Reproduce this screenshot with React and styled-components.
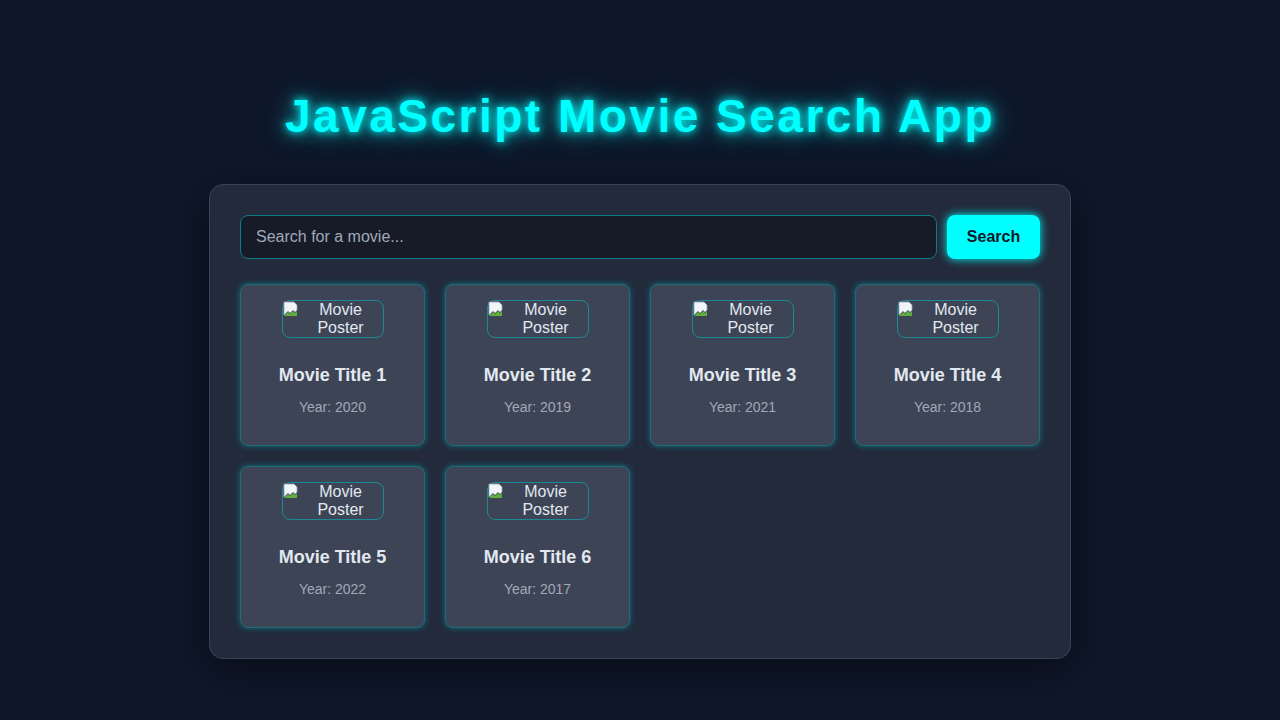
import React from "react";
import styled, { createGlobalStyle } from "styled-components";

const Global = createGlobalStyle`
  html, body { margin: 0; background: #0f172a; font-family: "Liberation Sans", Arial, sans-serif; }
`;
const Page = styled.div`
  min-height: 720px; display: flex; flex-direction: column; align-items: center; padding-top: 88px; box-sizing: border-box;
`;
const Title = styled.h1`
  margin: 0 0 40px; font-size: 46px; font-weight: 700; letter-spacing: 2.5px; color: #00ffff; line-height: 56px;
  text-shadow: 0 0 8px #00ffff, 0 0 18px rgba(0,255,255,0.6), 0 0 30px rgba(0,255,255,0.4);
`;
const Panel = styled.div`
  width: 862px; box-sizing: border-box; padding: 30px; background: #222a3b; border: 1px solid #3b4456;
  border-radius: 14px; box-shadow: 0 10px 40px rgba(0,0,0,0.5);
`;
const Bar = styled.div` display: flex; gap: 10px; margin-bottom: 25px; `;
const Input = styled.input`
  flex: 1; height: 44px; box-sizing: border-box; background: #161b27; border: 1px solid #0e7c86; border-radius: 8px;
  padding: 0 15px; font: 16px "Liberation Sans", Arial, sans-serif; color: #e2e8f0; outline: none;
  &::placeholder { color: #a0a9b8; }
`;
const Button = styled.button`
  width: 93px; height: 44px; border: none; border-radius: 8px; background: #00ffff; color: #111827;
  font: 700 16px "Liberation Sans", Arial, sans-serif; box-shadow: 0 0 10px #00ffff;
`;
const Grid = styled.div` display: grid; grid-template-columns: repeat(4, 185px); gap: 20px; `;
const Card = styled.div`
  height: 162px; box-sizing: border-box; background: #3d4455; border: 1px solid #1b6f78; border-radius: 8px;
  padding: 15px; display: flex; flex-direction: column; align-items: center;
  box-shadow: 0 0 6px rgba(0,200,210,0.45);
`;
const Poster = styled.div`
  position: relative; width: 102px; height: 38px; box-sizing: border-box; border: 1px solid #1b8a94; border-radius: 8px;
  color: #e2e8f0; font-size: 16px; line-height: 18px; text-align: center; padding: 0 0 0 16px;
`;
const Broken = styled.svg` position: absolute; left: 0; top: 0; `;
const Name = styled.h3` margin: 27px 0 0; font-size: 18px; font-weight: 700; color: #e2e8f0; line-height: 20px; `;
const Year = styled.p` margin: 14px 0 0; font-size: 14px; color: #a0a9b8; line-height: 16px; `;

const movies = [["1","2020"],["2","2019"],["3","2021"],["4","2018"],["5","2022"],["6","2017"]];

export default function App() {
  return (
    <Page>
      <Global />
      <Title>JavaScript Movie Search App</Title>
      <Panel>
        <Bar>
          <Input placeholder="Search for a movie..." />
          <Button>Search</Button>
        </Bar>
        <Grid>
          {movies.map(([n, y]) => (
            <Card key={n}>
              <Poster>
                <Broken width="16" height="16" viewBox="0 0 16 16">
                  <path d="M1 1h10l3 3v5l-2 2-2-2-3 3-2-2-4 4z" fill="#f1f5f9" stroke="#9aa5b4" strokeWidth="0.8"/>
                  <path d="M1 15l4-4 2 2 3-3 2 2 2-2v5H1z" fill="#5fae3e"/>
                </Broken>
                Movie Poster
              </Poster>
              <Name>Movie Title {n}</Name>
              <Year>Year: {y}</Year>
            </Card>
          ))}
        </Grid>
      </Panel>
    </Page>
  );
}
